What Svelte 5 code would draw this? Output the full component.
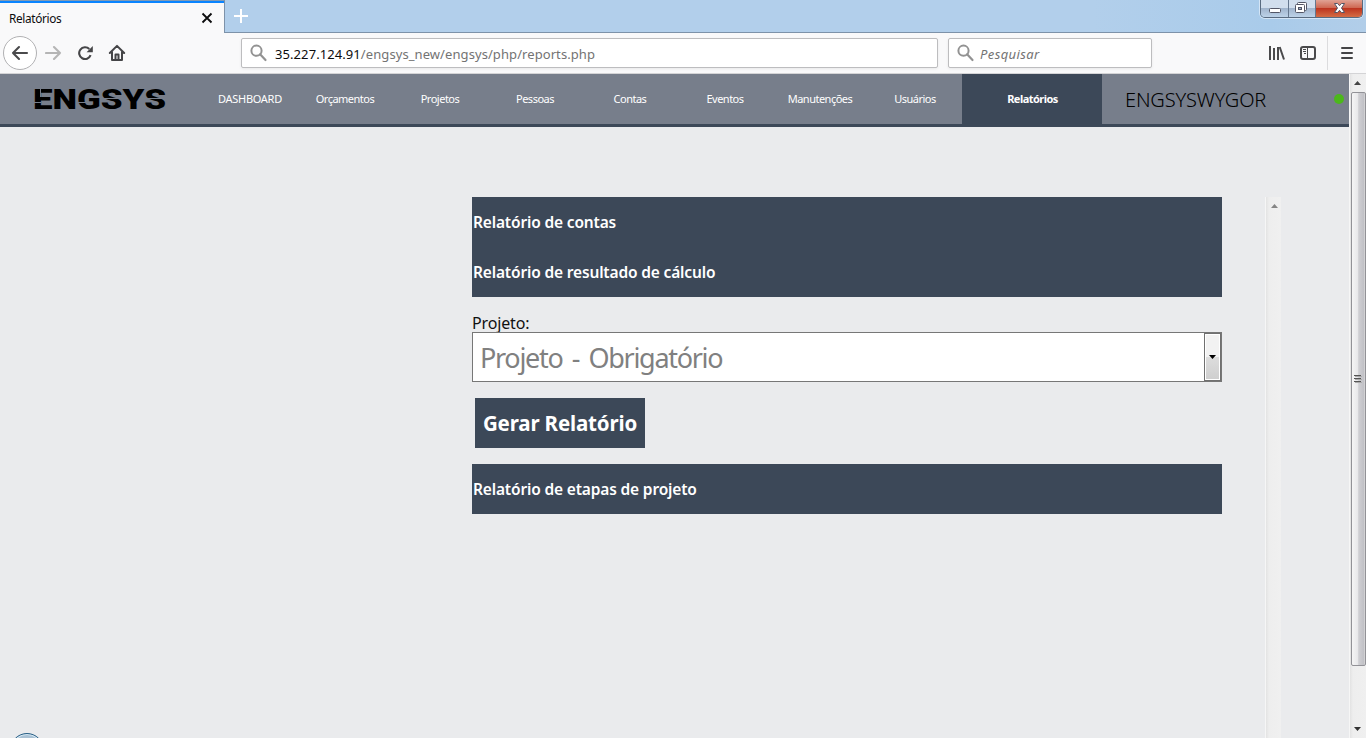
<script>
  const links = ['DASHBOARD', 'Orçamentos', 'Projetos', 'Pessoas', 'Contas', 'Eventos', 'Manutenções', 'Usuários'];
</script>

{#snippet magnifier()}
  <svg class="magnifier" width="18" height="18" viewBox="0 0 18 18" fill="none" stroke="#929292">
    <circle cx="6.5" cy="6.7" r="5.1" stroke-width="2" />
    <path d="M10.1 10.3 15.5 16" stroke-width="2.2" stroke-linecap="round" />
  </svg>
{/snippet}

<div class="window">
  <header class="tabs">
    <div class="tab">
      <span class="tab-title">Relatórios</span>
      <svg width="12" height="12" viewBox="0 0 12 12" stroke="#0c0c0d" stroke-width="1.8"><path d="M1.5 1.5 10.5 10.5M10.5 1.5 1.5 10.5" /></svg>
    </div>
    <svg class="plus" width="14" height="14" viewBox="0 0 14 14" stroke="#fff" stroke-width="2"><path d="M7 0V14M0 7H14" /></svg>
    <div class="controls">
      <div class="control min"><svg width="27" height="17" viewBox="0 0 27 17"><rect x="8.5" y="8.5" width="11" height="4" rx="1" fill="#fff" stroke="#535666" /></svg></div>
      <div class="control max"><svg width="26" height="17" viewBox="0 0 26 17" fill="#fff" stroke="#535666"><rect x="8.5" y="2.5" width="9" height="8" rx="1" /><rect x="6.5" y="4.5" width="9" height="8" rx="1" /><rect x="9.5" y="7.5" width="3" height="2" fill="#9eb0c8" /></svg></div>
      <div class="control close"><svg width="47" height="17" viewBox="0 0 47 17"><path d="M18.5 3.5H21.5L23.5 5.7 25.5 3.5H28.5L25.5 8 28.5 12.5H25.5L23.5 10.3 21.5 12.5H18.5L21.5 8Z" fill="#fff" stroke="#535666" stroke-linejoin="round" /></svg></div>
    </div>
  </header>

  <div class="toolbar">
    <div class="back"><svg width="18" height="16" viewBox="0 0 18 16" fill="none" stroke="#4a4a4c" stroke-width="2.1" stroke-linecap="round" stroke-linejoin="round"><path d="M16 8H2M8 2 2 8 8 14" /></svg></div>
    <svg class="forward" width="18" height="16" viewBox="0 0 18 16" fill="none" stroke="#b5b5b5" stroke-width="2.1" stroke-linecap="round" stroke-linejoin="round"><path d="M1 8H15M9 2 15 8 9 14" /></svg>
    <svg class="reload" width="16" height="16" viewBox="0 0 16 16"><path d="M12.6 10.2A5.9 5.9 0 1 1 11.3 4" fill="none" stroke="#454547" stroke-width="2.1" /><path d="M14.8 1V7.2H8.6Z" fill="#454547" /></svg>
    <svg class="home" width="18" height="18" viewBox="0 0 18 18" fill="none" stroke="#454547" stroke-width="2" stroke-linejoin="round" stroke-linecap="round"><path d="M1.8 9 9 1.9 16.2 9M4 8V16H14V8" /><path d="M7.5 16V10.5H10.5V16" /></svg>
    <div class="field address">
      {@render magnifier()}
      <span class="url"><b>35.227.124.91</b>/engsys_new/engsys/php/reports.php</span>
    </div>
    <div class="field search">
      {@render magnifier()}
      <i>Pesquisar</i>
    </div>
    <svg class="library" width="16" height="14" viewBox="0 0 16 14" stroke="#4a4a4c" stroke-width="2"><path d="M1 0V14M5 2V14M9 1V14M10.7 1 15 13.5" /></svg>
    <svg class="sidebar" width="16" height="14" viewBox="0 0 16 14" fill="none" stroke="#4a4a4c"><rect x="1" y="1" width="14" height="12" rx="2" stroke-width="2" /><path d="M7.5 1V13" /><path d="M3 3.5H6M3 5.5H6M4 7.5H6" /></svg>
    <div class="divider"></div>
    <svg class="menu" width="12" height="12" viewBox="0 0 12 12" stroke="#454547" stroke-width="2" stroke-linecap="round"><path d="M1 1H11M1 6H11M1 11H11" /></svg>
  </div>

  <div class="viewport">
    <div class="page">
      <nav>
        <div class="brand">
          <svg width="140" height="42" viewBox="-2 -6 140 42">
            <text x="0" y="25" textLength="133" lengthAdjust="spacingAndGlyphs">ENGSYS</text>
            <path d="M7.5 4V13M0 18.5H8M45 18.5H57M68 14.5H89.5M112 14.5H134" />
          </svg>
        </div>
        {#each links as link}
          <a href="#top">{link}</a>
        {/each}
        <a href="#top" class="active">Relatórios</a>
        <span class="user">ENGSYSWYGOR</span>
        <span class="online"></span>
      </nav>

      <div class="content">
        <main>
          <h3>Relatório de contas</h3>
          <h3>Relatório de resultado de cálculo</h3>
          <div class="form">
            <label for="project">Projeto:</label>
            <div class="select" id="project">
              <span>Projeto - Obrigatório</span>
              <div class="arrow"><svg width="7" height="4" viewBox="0 0 7 4"><path d="M0 0H7L3.5 4Z" /></svg></div>
            </div>
            <button>Gerar Relatório</button>
          </div>
          <h3 class="steps">Relatório de etapas de projeto</h3>
        </main>
        <div class="inner-scroll">
          <svg width="7" height="4" viewBox="0 0 7 4"><path d="M3.5 0 7 4H0Z" fill="#858585" /></svg>
        </div>
      </div>
      <div class="orb"></div>
    </div>
    <div class="scroll">
      <svg width="7" height="4" viewBox="0 0 7 4"><path d="M3.5 0 7 4H0Z" fill="#444" /></svg>
      <div class="thumb"><svg width="8" height="9" viewBox="0 0 8 9" stroke="#555"><path d="M0 .5H7M0 3.5H7M0 6.5H7" /><path d="M1 1.5H8M1 4.5H8M1 7.5H8" stroke="#aaa" /></svg></div>
      <svg width="7" height="4" viewBox="0 0 7 4"><path d="M0 0H7L3.5 4Z" fill="#333" /></svg>
    </div>
  </div>
</div>

<style>
  :global(body) { margin: 0; overflow: hidden; }
  .window { width: 1366px; height: 738px; display: flex; flex-direction: column; overflow: hidden; font-family: "Noto Sans", sans-serif; }
  .window :global(*) { box-sizing: border-box; }
  svg { display: block; flex: none; }

  .tabs { height: 33px; flex: none; display: flex; align-items: flex-start; background: linear-gradient(90deg, #b2cfeb 0 80%, #a9cbea 93%, #b2cee9); border-bottom: 1px solid #7d92a9; }
  .tab { width: 225px; height: 33px; display: flex; align-items: center; justify-content: space-between; padding: 1px 11px 0 9px; background: #f9f9fa; border-top: 1px solid #829bb5; border-right: 1px solid #7d92a9; box-shadow: inset 0 2px #0a84ff; }
  .tab-title { font-size: 11.8px; letter-spacing: -.35px; color: #0c0c0d; }
  .plus { margin: 9px 0 0 9px; }
  .controls { display: flex; margin-left: auto; margin-right: 3px; height: 18px; border: 1px solid #596b80; border-top: 0; border-radius: 0 0 5px 5px; overflow: hidden; box-shadow: 0 0 0 1px #d4e5f6; }
  .control { height: 17px; background: linear-gradient(#d1deed 0 45%, #a1b5cd 50%, #bdd2e8); border-right: 1px solid #65778e; }
  .min { width: 28px; }
  .max { width: 27px; }
  .close { width: 46px; border: 0; background: linear-gradient(#e0a294 0, #cf6953 45%, #bd3520 50%, #d46d45); }

  .toolbar { height: 41px; flex: none; display: flex; align-items: center; background: #f9f9fa; border-bottom: 1px solid #d4d4d6; padding-left: 3px; }
  .back { width: 34px; height: 34px; border: 1px solid #b1b1b3; border-radius: 50%; background: #fff; display: grid; place-items: center; }
  .forward { margin-left: 8px; }
  .reload { margin-left: 15px; }
  .home { margin-left: 14px; }
  .field { height: 30px; display: flex; align-items: center; background: #fff; border: 1px solid #bdbdbf; border-radius: 2px; box-shadow: 0 1px 3px #0001; padding-left: 8px; font-size: 13px; color: #737373; white-space: nowrap; }
  .address { width: 697px; margin-left: 115px; }
  .url { margin-left: 7px; padding-top: 1px; letter-spacing: .08px; }
  .url b { font-weight: 400; color: #0c0c0d; }
  .search { width: 204px; margin-left: 10px; }
  .search i { margin-left: 5px; padding-top: 1px; letter-spacing: .4px; }
  .library { margin-left: 117px; }
  .sidebar { margin-left: 15px; }
  .divider { width: 1px; height: 34px; background: #dcdcde; margin-left: 11px; }
  .menu { margin-left: 13px; }

  .viewport { flex: 1; min-height: 0; display: flex; }
  .page { position: relative; flex: 1; display: flex; flex-direction: column; background: #eaebed; }
  nav { height: 53px; flex: none; display: flex; align-items: stretch; background: #777e8b; border-bottom: 3px solid #3c4858; }
  .brand { width: 202px; padding: 4px 0 0 31px; }
  .brand text { font: 900 28px Roboto, sans-serif; fill: #000; }
  .brand path { stroke: #777e8b; fill: none; }
  nav a { width: 95px; display: grid; place-items: center; color: #fff; font-size: 11px; letter-spacing: -.5px; text-decoration: none; padding: 0 0 2px 1px; }
  nav a:first-of-type { letter-spacing: -.3px; }
  nav .active { width: 140px; background: #3c4858; font-weight: 700; letter-spacing: -.52px; }
  .user { margin-left: 23px; align-self: center; font-size: 20px; font-weight: 300; letter-spacing: -.15px; color: #000; }
  .online { width: 10px; height: 10px; border-radius: 50%; background: #4cb81b; align-self: center; margin: 0 5px 0 auto; }

  .content { flex: 1; display: flex; margin-top: 70px; padding-left: 472px; }
  main { width: 750px; }
  h3 { margin: 0; height: 50px; display: flex; align-items: center; padding-left: 1px; background: #3c4858; color: #fff; font-size: 15.5px; font-weight: 600; letter-spacing: -.16px; }
  .form { display: flex; flex-direction: column; align-items: flex-start; height: 167px; padding-top: 17px; }
  label { height: 18px; line-height: 19px; font-size: 16px; color: #111; letter-spacing: -.15px; }
  .select { width: 750px; height: 50px; display: flex; justify-content: space-between; align-items: center; border: 1px solid #777; background: #fff; padding-left: 7px; color: #808080; font-size: 27px; letter-spacing: -1.3px; word-spacing: 3.6px; }
  .arrow { width: 17px; height: 48px; border: 1px solid #707070; box-shadow: inset 0 0 0 1px #fff; background: linear-gradient(#f2f2f2 0 50%, #dddddd 50%, #cecece); display: grid; place-items: center; }
  button { margin: 16px 0 0 3px; width: 170px; height: 50px; border: 0; padding: 0; background: #3c4858; color: #fff; font: 700 20.5px "Noto Sans", sans-serif; letter-spacing: -.15px; white-space: nowrap; }
  .inner-scroll { width: 16px; margin-left: 43px; background: linear-gradient(90deg, #f6f6f6 1px, #e3e3e3 1px, #eee 4px, #f0f0f0); padding: 7px 0 0 6px; }

  .orb { position: absolute; left: 10px; top: 659px; width: 34px; height: 34px; border: 1px solid #2b6187; border-radius: 50%; background: #a9c1d4; box-shadow: inset 0 0 0 1px #d5e8f3; }
  .scroll { width: 17px; display: flex; flex-direction: column; align-items: center; background: linear-gradient(90deg, #f6f6f6 1px, #e3e3e3 1px, #eee 4px, #f0f0f0); padding: 7px 0; }
  .thumb { width: 15px; height: 574px; margin: 7px 0 auto 1px; border: 1px solid #929297; border-radius: 2px; background: linear-gradient(90deg, #f5f5f5, #e9e9eb 42%, #cfcfd3 52%, #c1c1c6 90%, #ddd); display: grid; place-items: center; }
</style>
